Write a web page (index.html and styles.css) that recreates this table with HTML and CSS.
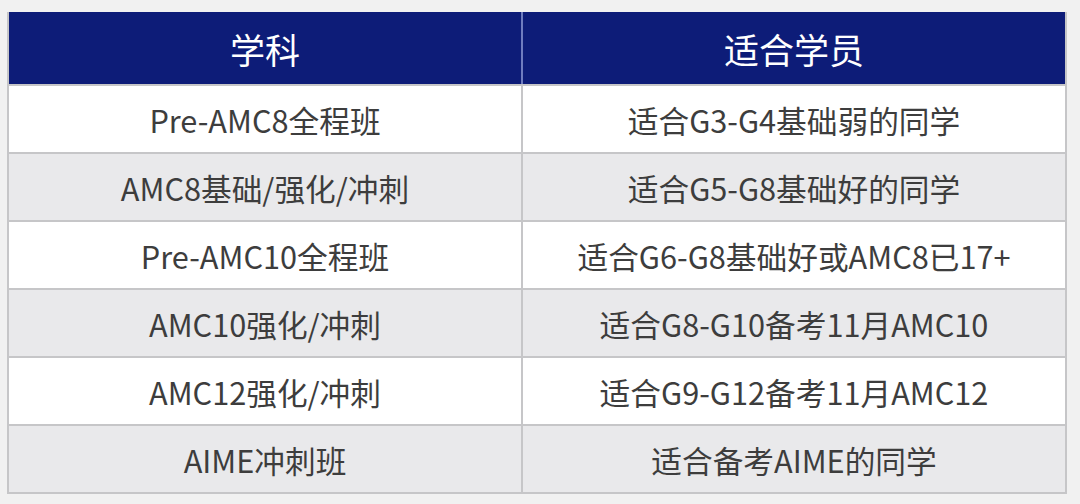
FILE: index.html
```html
<!DOCTYPE html>
<html lang="zh-CN">
<head>
<meta charset="utf-8">
<link rel="stylesheet" href="styles.css">
</head>
<body>
<div class="page">
  <div class="table">
    <div class="row head">
      <div class="cell">学科</div>
      <div class="cell">适合学员</div>
    </div>
    <div class="row">
      <div class="cell">Pre-AMC8全程班</div>
      <div class="cell">适合G3-G4基础弱的同学</div>
    </div>
    <div class="row alt">
      <div class="cell">AMC8基础/强化/冲刺</div>
      <div class="cell">适合G5-G8基础好的同学</div>
    </div>
    <div class="row">
      <div class="cell">Pre-AMC10全程班</div>
      <div class="cell">适合G6-G8基础好或AMC8已17+</div>
    </div>
    <div class="row alt">
      <div class="cell">AMC10强化/冲刺</div>
      <div class="cell">适合G8-G10备考11月AMC10</div>
    </div>
    <div class="row">
      <div class="cell">AMC12强化/冲刺</div>
      <div class="cell">适合G9-G12备考11月AMC12</div>
    </div>
    <div class="row alt">
      <div class="cell">AIME冲刺班</div>
      <div class="cell">适合备考AIME的同学</div>
    </div>
  </div>
</div>
</body>
</html>
```
FILE: styles.css
```css
html, body {
  margin: 0;
  padding: 0;
}
body {
  background: #f1f1f1;
  font-family: "Noto Sans CJK SC", "Noto Sans", sans-serif;
  width: 1080px;
  height: 504px;
  overflow: hidden;
}
.page {
  padding: 12px 13px 0 7px;
}
.table {
  display: flex;
  flex-direction: column;
  border: 2px solid #c6c6c8;
  border-top: none;
  background: #ffffff;
}
.row {
  display: grid;
  grid-template-columns: 512px 1fr;
  height: 68px;
  border-top: 2px solid #c6c6c8;
  box-sizing: border-box;
}
.row .cell {
  display: flex;
  align-items: center;
  justify-content: center;
  font-size: 30.7px;
  color: #3d3d3d;
}
.row .cell + .cell {
  border-left: 2px solid #c6c6c8;
}
.row.alt {
  background: #e9e9eb;
}
.row.head {
  height: 72px;
  border-top: none;
  background: #0d1c78;
}
.row.head .cell {
  color: #ffffff;
  font-size: 35px;
}
.row.head .cell + .cell {
  border-left: 2px solid #6f7cbf;
}
```
